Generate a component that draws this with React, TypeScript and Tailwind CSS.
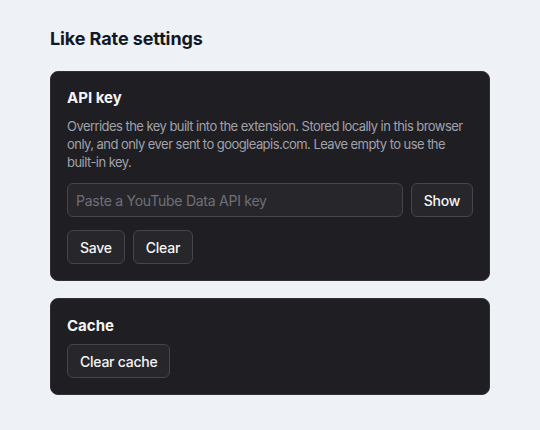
const font = { fontFamily: "Inter, 'Noto Sans', sans-serif" };

function Btn({ children }: { children: React.ReactNode }) {
  return (
    <button className="h-[34px] rounded-md border border-[#45454c] bg-[#27272b] px-3 text-[14px] font-medium tracking-[-0.25px] text-[#f4f4f5]">
      {children}
    </button>
  );
}

export default function App() {
  return (
    <div className="min-h-[430px] bg-[#eef1f6] px-[50px] pt-[27px] pb-8" style={font}>
      <h1 className="text-[18px] leading-[24px] font-bold tracking-[-0.1px] text-[#111827]">Like Rate settings</h1>

      <section className="mt-5 rounded-lg border border-[#2f2f35] bg-[#1f1f23] p-4">
        <h2 className="text-[15px] leading-5 font-bold text-[#f4f4f5]">API key</h2>
        <p className="mt-[9px] text-[13px] leading-[18px] tracking-[-0.55px] text-[#a1a1aa]">
          Overrides the key built into the extension. Stored locally in this browser only, and only ever sent to
          googleapis.com. Leave empty to use the built-in key.
        </p>
        <div className="mt-3 flex gap-2">
          <input
            className="h-[34px] flex-1 rounded-md border border-[#45454c] bg-[#27272b] px-2 text-[14px] tracking-[-0.25px] text-[#f4f4f5] placeholder:text-[#6f6f78] outline-none"
            placeholder="Paste a YouTube Data API key"
          />
          <Btn>Show</Btn>
        </div>
        <div className="mt-[13px] flex gap-2">
          <Btn>Save</Btn>
          <Btn>Clear</Btn>
        </div>
      </section>

      <section className="mt-[17px] rounded-lg border border-[#2f2f35] bg-[#1f1f23] px-4 pt-[17px] pb-4">
        <h2 className="text-[15px] leading-5 font-bold text-[#f4f4f5]">Cache</h2>
        <div className="mt-2 flex">
          <Btn>Clear cache</Btn>
        </div>
      </section>
    </div>
  );
}
